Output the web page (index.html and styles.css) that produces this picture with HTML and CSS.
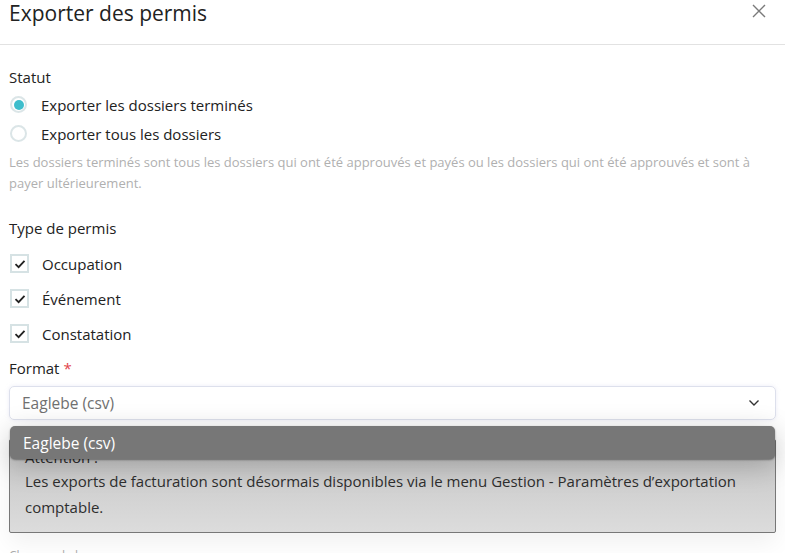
FILE: index.html
```html
<!DOCTYPE html>
<html lang="fr">
<head>
<meta charset="utf-8">
<link rel="stylesheet" href="styles.css">
</head>
<body>
<div class="modal">
  <header class="modal-header">
    <h1 class="modal-title">Exporter des permis</h1>
    <button class="close" aria-label="Fermer">
      <svg width="16" height="16" viewBox="0 0 16 16"><path d="M2 2 L14 14 M14 2 L2 14" stroke="#7a7a7a" stroke-width="1.4" fill="none"/></svg>
    </button>
  </header>
  <div class="modal-body">
    <div class="group">
      <div class="label">Statut</div>
      <div class="radios">
        <label class="radio-row"><span class="radio checked"></span><span>Exporter les dossiers terminés</span></label>
        <label class="radio-row"><span class="radio"></span><span>Exporter tous les dossiers</span></label>
      </div>
      <p class="help">Les dossiers terminés sont tous les dossiers qui ont été approuvés et payés ou les dossiers qui ont été approuvés et sont à payer ultérieurement.</p>
    </div>
    <div class="group types">
      <div class="label">Type de permis</div>
      <div class="checks">
        <label class="check-row"><span class="check"><svg width="12" height="10" viewBox="0 0 12 10"><path d="M1.5 5.2 L4.6 8.2 L10.5 1.8" stroke="#222" stroke-width="1.8" fill="none"/></svg></span><span>Occupation</span></label>
        <label class="check-row"><span class="check"><svg width="12" height="10" viewBox="0 0 12 10"><path d="M1.5 5.2 L4.6 8.2 L10.5 1.8" stroke="#222" stroke-width="1.8" fill="none"/></svg></span><span>Événement</span></label>
        <label class="check-row"><span class="check"><svg width="12" height="10" viewBox="0 0 12 10"><path d="M1.5 5.2 L4.6 8.2 L10.5 1.8" stroke="#222" stroke-width="1.8" fill="none"/></svg></span><span>Constatation</span></label>
      </div>
    </div>
    <div class="group format">
      <div class="label">Format <span class="req">*</span></div>
      <div class="select">
        <span>Eaglebe (csv)</span>
        <svg width="12" height="8" viewBox="0 0 12 8"><path d="M1.5 1.5 L6 6 L10.5 1.5" stroke="#333" stroke-width="1.4" fill="none"/></svg>
      </div>
      <div class="menu"><div class="option">Eaglebe (csv)</div></div>
      <div class="alert">
        <div class="alert-title">Attention :</div>
        <p>Les exports de facturation sont désormais disponibles via le menu Gestion - Paramètres d’exportation comptable.</p>
      </div>
      <div class="cut">Champs de la</div>
    </div>
  </div>
</div>
</body>
</html>
```
FILE: styles.css
```css
* { box-sizing: border-box; }
html, body { margin: 0; padding: 0; }
body {
  font-family: "Open Sans", "Liberation Sans", sans-serif;
  color: #222;
  background: #fff;
  width: 785px;
  height: 553px;
  overflow: hidden;
}
.modal { width: 785px; }
.modal-header {
  display: flex;
  align-items: flex-start;
  justify-content: space-between;
  height: 45px;
  padding: 0 18px 0 9px;
  border-bottom: 1px solid #e2e2e2;
}
.modal-title {
  margin: 0;
  font-size: 21px;
  font-weight: 400;
  color: #222;
  line-height: 26px;
}
.close {
  border: 0;
  background: none;
  padding: 0;
  margin-top: 3px;
  display: flex;
}
.modal-body { padding: 21px 9px 0 9px; }
.label { font-size: 15px; line-height: 22px; color: #222; }
.req { color: #e2444c; }
.radios { margin-top: 2px; }
.radio-row {
  display: flex;
  align-items: center;
  gap: 14px;
  height: 29px;
  font-size: 15px;
  padding-left: 1px;
}
.radio {
  width: 17px; height: 17px;
  border-radius: 50%;
  border: 2px solid #dbe5e7;
  background: #fff;
  display: flex; align-items: center; justify-content: center;
}
.radio.checked::after {
  content: "";
  width: 10px; height: 10px; border-radius: 50%;
  background: #3dbdcc;
}
.help {
  margin: 4px 0 0 0;
  font-size: 13px;
  line-height: 21px;
  color: #b0b0b0;
}
.types { margin-top: 23px; }
.checks { margin-top: 7px; }
.check-row {
  display: flex;
  align-items: center;
  gap: 13px;
  height: 35px;
  font-size: 15px;
  padding-left: 1px;
}
.check {
  width: 19px; height: 19px;
  border: 2px solid #d6e2e4;
  background: #fff;
  display: flex; align-items: center; justify-content: center;
}
.format { margin-top: 6px; position: relative; }
.select {
  margin-top: 7px;
  height: 34px;
  border: 1px solid #dde0ec;
  border-radius: 5px;
  display: flex; align-items: center; justify-content: space-between;
  padding: 0 15px 0 12px;
  font-size: 15.5px;
  color: #707070;
  box-shadow: 0 0 4px rgba(200,200,230,0.35);
}
.menu {
  position: absolute;
  left: 1px; right: 1px;
  top: 69px;
  height: 33px;
  background: #777;
  border-radius: 5px;
  box-shadow: 0 6px 28px rgba(0,0,0,0.22), 0 1px 2px rgba(0,0,0,0.4);
  z-index: 2;
  display: flex; align-items: center;
}
.option { color: #fff; font-size: 15.5px; padding-left: 13px; }
.alert {
  margin-top: 19px;
  border: 1px solid #777;
  border-radius: 2px;
  background: linear-gradient(#c4c4c4, #dcdcdc);
  padding: 4px 12px 12px 15px;
  font-size: 15px;
  line-height: 26px;
  color: #2e2e2e;
  box-shadow: 0 10px 24px rgba(0,0,0,0.06);
}
.alert-title { height: 24px; line-height: 26px; }
.alert p { margin: 0; }
.cut {
  margin-top: 14px;
  font-size: 12px;
  color: #aaa;
  height: 20px;
}
```
